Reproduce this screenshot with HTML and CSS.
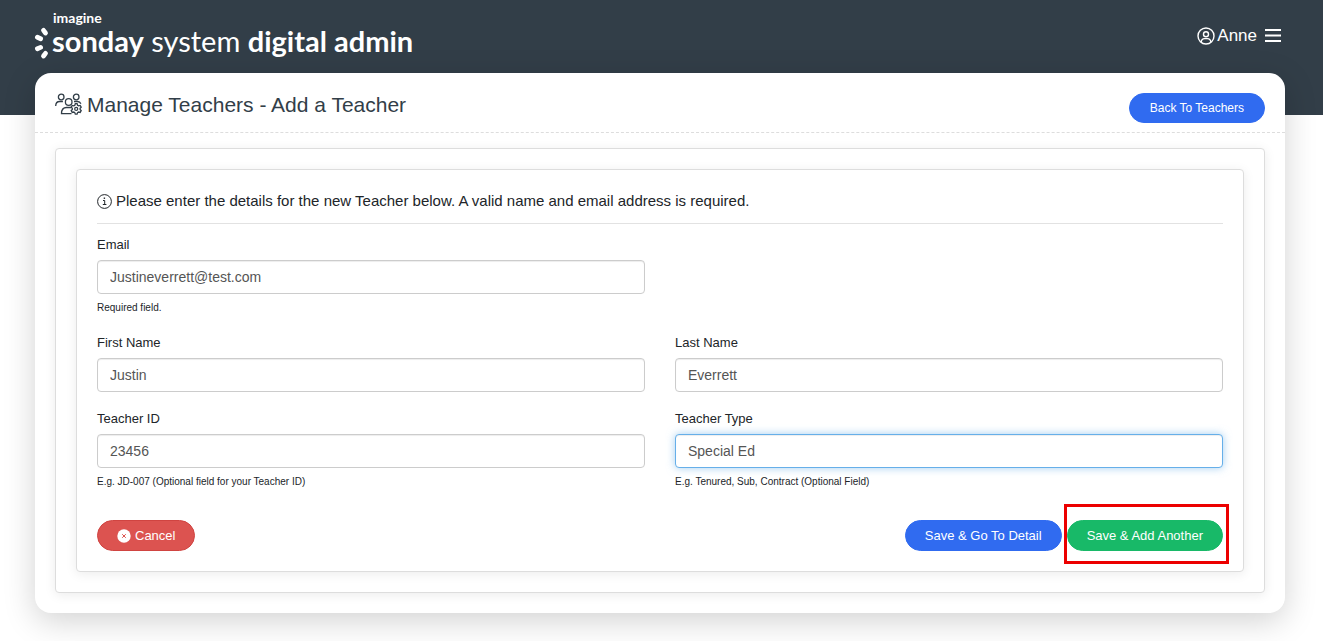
FILE: index.html
```
<!DOCTYPE html>
<html lang="en">

<head>
    <meta charset="UTF-8">
    <meta name="viewport" content="width=device-width, initial-scale=1.0">
    <title>Manage Teachers - Add a Teacher</title>
    <link rel="stylesheet" href="styles.css">
</head>

<body>
    <header class="header">
        <a href="#" class="logo">
            <svg class="logo-mark" width="15" height="33" viewBox="0 0 15 33" stroke="#fff" stroke-width="4.800" stroke-linecap="round">
                <path d="M9.500 3.400l2 2.600M3.400 10.300l3.200 1.400M3.400 21.700l3.200-1.300M9.500 29l2-2.600"/>
            </svg>
            <span class="logo-text">
                <span class="logo-top">imagine</span>
                <span class="logo-name"><b>sonday</b> system <b>digital admin</b></span>
            </span>
        </a>
        <div class="user">
            <a href="#" class="user-link">
                <svg width="18" height="18" viewBox="0 0 18 18" fill="none" stroke="#fff" stroke-width="1.4">
                    <circle cx="9" cy="9" r="8"/>
                    <circle cx="9" cy="7.2" r="2.5"/>
                    <path d="M4.2 15c.3-2.400 1.600-3.400 3.300-3.400h3c1.700 0 3 1 3.300 3.400"/>
                </svg>
                Anne
            </a>
            <button type="button" class="menu" aria-label="Menu">
                <svg width="16" height="14" viewBox="0 0 16 14" stroke="#fff" stroke-width="2">
                    <path d="M0 1h16M0 6.500h16M0 12h16"/>
                </svg>
            </button>
        </div>
    </header>

    <main class="card">
        <div class="card-head">
            <h1 class="title">
                <svg width="27" height="24" viewBox="0 0 27 24" fill="none" stroke="#323e48" stroke-width="1.3">
                    <circle cx="6.200" cy="4" r="2.800"/>
                    <circle cx="21.200" cy="4" r="2.800"/>
                    <circle cx="13.700" cy="9" r="3.300"/>
                    <path d="M.7 13c0-3 1.600-4.500 4-4.500h3.200M19 8.500h3.500c1.700 0 2.800.8 3.400 2.200M16 14.500h-4.500c-3.200 0-5 2-5 6.200h10"/>
                    <path d="M20.300 10.700h1.800l.5 1.500 1 .6 1.600-.4 1 1.700-1.100 1.200v1.200l1.100 1.200-1 1.700-1.600-.4-1 .6-.5 1.500h-1.800l-.5-1.500-1-.6-1.600.4-1-1.700 1.100-1.200v-1.200l-1.100-1.200 1-1.700 1.600.4 1-.6z"/>
                    <circle cx="21.200" cy="15.900" r="1.500"/>
                </svg>
                Manage Teachers - Add a Teacher
            </h1>
            <a href="#" class="btn btn-small btn-blue">Back To Teachers</a>
        </div>

        <div class="panel panel-outer">
            <form class="panel panel-inner">
                <p class="info">
                    <svg width="15" height="15" viewBox="0 0 15 15" fill="none" stroke="#212529">
                        <circle cx="7.500" cy="7.500" r="6.900"/>
                        <path d="M6 6.500h1.700v4M5.800 10.500h3.600"/>
                        <path d="M6.700 4.200h1.400" stroke-width="1.400"/>
                    </svg>
                    Please enter the details for the new Teacher below. A valid name and email address is required.
                </p>
                <div class="fields">
                    <div class="field field-first">
                        <label for="email">Email</label>
                        <input type="email" id="email" value="Justineverrett@test.com" required>
                        <small>Required field.</small>
                    </div>
                    <div class="field field-first">
                        <label for="first-name">First Name</label>
                        <input type="text" id="first-name" value="Justin">
                    </div>
                    <div class="field">
                        <label for="last-name">Last Name</label>
                        <input type="text" id="last-name" value="Everrett">
                    </div>
                    <div class="field field-first">
                        <label for="teacher-id">Teacher ID</label>
                        <input type="text" id="teacher-id" value="23456">
                        <small>E.g. JD-007 (Optional field for your Teacher ID)</small>
                    </div>
                    <div class="field">
                        <label for="teacher-type">Teacher Type</label>
                        <input type="text" id="teacher-type" class="active" value="Special Ed">
                        <small>E.g. Tenured, Sub, Contract (Optional Field)</small>
                    </div>
                </div>
                <div class="buttons">
                    <button type="button" class="btn btn-red">
                        <svg width="14" height="14" viewBox="0 0 14 14">
                            <circle cx="7" cy="7" r="6.700" fill="#fff"/>
                            <path d="M5.200 5.200l3.600 3.600M8.800 5.200l-3.600 3.600" stroke="#dc5350"/>
                        </svg>
                        Cancel
                    </button>
                    <div class="save">
                        <button type="submit" class="btn btn-blue">Save &amp; Go To Detail</button>
                        <div class="highlight">
                            <button type="submit" class="btn btn-green">Save &amp; Add Another</button>
                        </div>
                    </div>
                </div>
            </form>
        </div>
    </main>
</body>

</html>
```
FILE: styles.css
```
* {
    box-sizing: border-box;
}
body {
    margin: 0;
    background-color: #fff;
    color: #212529;
    font-family: "Liberation Sans", Arial, sans-serif;
    font-size: 13px;
    line-height: 20px;
}
.header {
    display: flex;
    justify-content: space-between;
    align-items: flex-start;
    height: 115px;
    padding: 11px 42px 0 34px;
    background: #323e48;
}
.logo {
    display: flex;
    align-items: flex-start;
    gap: 3px;
    color: #fff;
    text-decoration: none;
    font-family: Lato, sans-serif;
}
.logo-mark {
    margin-top: 16px;
    fill: none;
}
.logo-text {
    display: flex;
    flex-direction: column;
}
.logo-top {
    padding-left: 1px;
    font-size: 14px;
    font-weight: bold;
    line-height: 14px;
}
.logo-name {
    font-size: 29px;
    line-height: 32px;
}
.user {
    display: flex;
    align-items: center;
    gap: 8px;
    padding-top: 15px;
}
.user-link {
    display: flex;
    align-items: center;
    gap: 2px;
    color: #fff;
    font-size: 17px;
    text-decoration: none;
}
.menu {
    display: flex;
    padding: 0;
    border: 0;
    background: none;
    cursor: pointer;
}
.card {
    margin: -42px 38px 28px 35px;
    padding-bottom: 20px;
    background: #fff;
    border-radius: 16px;
    box-shadow: 0 8px 32px rgba(0,0,0,.18);
}
.card-head {
    display: flex;
    justify-content: space-between;
    align-items: flex-start;
    height: 60px;
    padding: 20px 20px 0;
    border-bottom: 1px dashed #ddd;
}
.title {
    display: flex;
    align-items: center;
    gap: 5px;
    margin: 0;
    color: #323e48;
    font-size: 21px;
    font-weight: normal;
    line-height: 24px;
}
.panel {
    padding: 20px;
    background: #fff;
    border: 1px solid #ddd;
    border-radius: 4px;
    box-shadow: 0 2px 12px rgba(0,0,0,.08);
}
.panel-outer {
    margin: 15px 20px 0;
}
.info {
    display: flex;
    align-items: center;
    gap: 4px;
    margin: 0 0 11px;
    padding-bottom: 11px;
    border-bottom: 1px solid #e2e2e2;
    font-size: 15px;
    line-height: 22px;
}
.fields {
    display: grid;
    grid-template-columns: 1fr 1fr;
    gap: 17px 30px;
}
.field {
    display: flex;
    flex-direction: column;
}
.field-first {
    grid-column: 1;
}
.field label {
    margin-bottom: 5px;
}
.field input {
    width: 100%;
    height: 34px;
    padding: 0 12px;
    border: 1px solid #ccc;
    border-radius: 4px;
    box-shadow: inset 0 1px 1px rgba(0,0,0,.075);
    background: #fff;
    color: #555;
    font-family: inherit;
    font-size: 14px;
}
.field input.active,
.field input:focus {
    border-color: #66afe9;
    outline: 0;
    box-shadow: inset 0 1px 1px rgba(0,0,0,.075), 0 0 8px rgba(102,175,233,.6);
}
.field small {
    margin-top: 6px;
    font-size: 10px;
    line-height: 16px;
}
.buttons {
    display: flex;
    justify-content: space-between;
    margin-top: 30px;
}
.save {
    display: flex;
    gap: 5px;
}
.btn {
    display: flex;
    align-items: center;
    gap: 4px;
    height: 31px;
    padding: 0 19px;
    border: 1px solid transparent;
    border-radius: 16px;
    color: #fff;
    font-family: inherit;
    font-size: 13px;
    text-decoration: none;
    cursor: pointer;
}
.btn-small {
    height: 30px;
    padding: 0 20px;
    font-size: 12px;
}
.btn-blue {
    background: #306bf0;
    border-color: #306bf0;
}
.btn-green {
    background: #18b968;
    border-color: #18b968;
}
.btn-red {
    background: #dc5350;
    border-color: #d04441;
}
.highlight {
    position: relative;
}
.highlight:after {
    content: "";
    position: absolute;
    top: -16px;
    right: -6px;
    bottom: -13px;
    left: -3px;
    border: 3px solid #ec0000;
    pointer-events: none;
}
```
